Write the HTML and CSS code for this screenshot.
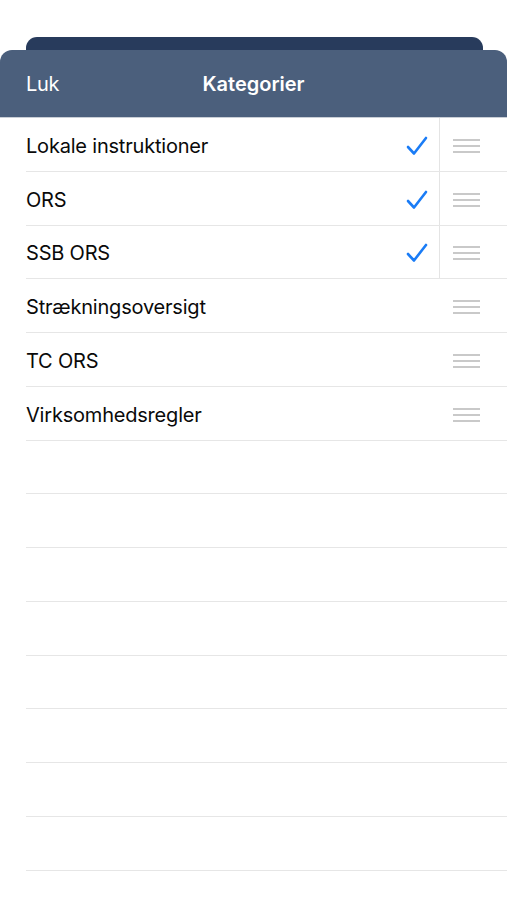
FILE: index.html
```html
<!DOCTYPE html>
<html lang="da">
<head>
<meta charset="utf-8">
<title>Kategorier</title>
<link rel="stylesheet" href="styles.css">
</head>
<body>
<div class="screen">
  <div class="back-card"></div>
  <header class="navbar">
    <span class="nav-btn">Luk</span>
    <span class="nav-title">Kategorier</span>
    <span class="nav-spacer"></span>
  </header>
  <ul class="list">
    <li class="row checked"><span class="label">Lokale instruktioner</span><span class="check"><svg width="22" height="20" viewBox="0 0 22 20"><path d="M2 11 L8 17.5 L20 2" fill="none" stroke="#1a7cf6" stroke-width="2.6" stroke-linecap="round" stroke-linejoin="round"/></svg></span><span class="handle"><i></i><i></i><i></i></span></li>
    <li class="row checked"><span class="label">ORS</span><span class="check"><svg width="22" height="20" viewBox="0 0 22 20"><path d="M2 11 L8 17.5 L20 2" fill="none" stroke="#1a7cf6" stroke-width="2.6" stroke-linecap="round" stroke-linejoin="round"/></svg></span><span class="handle"><i></i><i></i><i></i></span></li>
    <li class="row checked"><span class="label">SSB ORS</span><span class="check"><svg width="22" height="20" viewBox="0 0 22 20"><path d="M2 11 L8 17.5 L20 2" fill="none" stroke="#1a7cf6" stroke-width="2.6" stroke-linecap="round" stroke-linejoin="round"/></svg></span><span class="handle"><i></i><i></i><i></i></span></li>
    <li class="row"><span class="label">Strækningsoversigt</span><span class="check"></span><span class="handle"><i></i><i></i><i></i></span></li>
    <li class="row"><span class="label">TC ORS</span><span class="check"></span><span class="handle"><i></i><i></i><i></i></span></li>
    <li class="row"><span class="label">Virksomhedsregler</span><span class="check"></span><span class="handle"><i></i><i></i><i></i></span></li>
    <li class="row empty"></li>
    <li class="row empty"></li>
    <li class="row empty"></li>
    <li class="row empty"></li>
    <li class="row empty"></li>
    <li class="row empty"></li>
    <li class="row empty"></li>
    <li class="row empty"></li>
  </ul>
</div>
</body>
</html>
```
FILE: styles.css
```css
* { box-sizing: border-box; }
html, body {
  margin: 0;
  padding: 0;
  background: #ffffff;
  font-family: Inter, "Noto Sans", "Liberation Sans", sans-serif;
}
.screen {
  width: 507px;
  height: 900px;
  overflow: hidden;
  padding-top: 37px;
  background: #ffffff;
}
.back-card {
  height: 13px;
  margin: 0 24px 0 26px;
  background: #283b5c;
  border-radius: 11px 11px 0 0;
}
.navbar {
  height: 68px;
  background: #4b5f7c;
  border-radius: 12px 12px 0 0;
  display: flex;
  align-items: center;
  padding: 0 26px;
  color: #ffffff;
  font-size: 20px;
  border-bottom: 1px solid #c9ced6;
}
.nav-btn {
  width: 100px;
  font-weight: 400;
  letter-spacing: -0.3px;
}
.nav-title {
  flex: 1;
  text-align: center;
  font-weight: 600;
  letter-spacing: 0;
}
.nav-spacer { width: 100px; }
.list {
  list-style: none;
  margin: 0;
  padding: 0 0 0 26px;
}
.row {
  height: 53.77px;
  display: flex;
  align-items: center;
  border-bottom: 1px solid #e6e6e6;
  font-size: 20px;
  color: #0a0a0a;
  letter-spacing: -0.2px;
}
.label {
  flex: 1;
  padding-top: 3px;
}
.check {
  width: 34px;
  height: 100%;
  display: flex;
  align-items: center;
  justify-content: flex-start;
  padding-top: 3px;
}
.row.checked .check {
  border-right: 1px solid #e4e4e4;
}
.handle {
  width: 67px;
  height: 100%;
  display: flex;
  flex-direction: column;
  justify-content: center;
  gap: 4px;
  padding-left: 13px;
  padding-top: 3px;
}
.handle i {
  display: block;
  width: 27px;
  height: 2px;
  background: #c9c9c9;
}
```
